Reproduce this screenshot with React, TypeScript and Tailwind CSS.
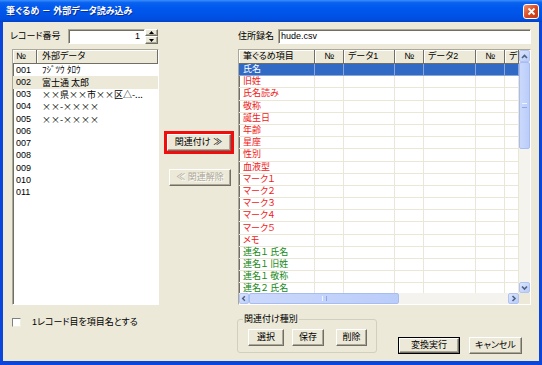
import React from "react";

const FONT = "[font-family:'Liberation_Sans','Noto_Sans_CJK_JP',sans-serif] [font-feature-settings:'palt']";
const CJK = "[font-family:'Noto_Sans_CJK_JP',sans-serif]";

const btn =
  "flex items-center justify-center bg-[#ece9d8] border border-t-white border-l-white border-b-[#716f64] border-r-[#716f64] shadow-[inset_-1px_-1px_0_#aca899]";

const sunken =
  "border border-t-[#aca899] border-l-[#aca899] border-b-white border-r-white shadow-[inset_1px_1px_0_#716f64]";

const headCell =
  "flex items-center h-full border-r border-r-[#716f64] shadow-[inset_1px_1px_0_#fff] overflow-hidden whitespace-nowrap";

const records = [
  ["001", "ﾌｼﾞﾂｳ ﾀﾛｳ"],
  ["002", "富士通 太郎"],
  ["003", "××県××市××区△-..."],
  ["004", "××-××××"],
  ["005", "××-××××"],
  ["006", ""],
  ["007", ""],
  ["008", ""],
  ["009", ""],
  ["010", ""],
  ["011", ""],
];

const items: [string, string][] = [
  ["氏名", "sel"],
  ["旧姓", "red"],
  ["氏名読み", "red"],
  ["敬称", "red"],
  ["誕生日", "red"],
  ["年齢", "red"],
  ["星座", "red"],
  ["性別", "red"],
  ["血液型", "red"],
  ["マーク１", "red"],
  ["マーク２", "red"],
  ["マーク３", "red"],
  ["マーク４", "red"],
  ["マーク５", "red"],
  ["メモ", "red"],
  ["連名１ 氏名", "green"],
  ["連名１ 旧姓", "green"],
  ["連名１ 敬称", "green"],
  ["連名２ 氏名", "green"],
];

// column widths of the mapping grid
const cols = ["w-[76px]", "w-[29px]", "w-[51px]", "w-[29px]", "w-[52px]", "w-[29px]", "w-[14px]"];
const heads = ["筆ぐるめ項目", "№", "データ1", "№", "データ2", "№", "デ"];

const Chevron = ({ dir }: { dir: "up" | "down" | "left" | "right" }) => {
  const pts = {
    up: "2,6 4.5,3.5 7,6",
    down: "2,3.5 4.5,6 7,3.5",
    left: "5.5,2 3,4.5 5.5,7",
    right: "3.5,2 6,4.5 3.5,7",
  }[dir];
  return (
    <svg width="9" height="9" viewBox="0 0 9 9">
      <polyline points={pts} fill="none" stroke="#4d6185" strokeWidth="1.6" />
    </svg>
  );
};

const sbBtn =
  "flex items-center justify-center bg-[linear-gradient(135deg,#dbe5fd,#b9cbf8)] border border-[#b0c4f3] rounded-[2px]";
const sbThumb =
  "flex items-center justify-center bg-[linear-gradient(90deg,#cbd8fc,#bacdf9)] border border-[#a7bdf1] rounded-[2px]";

const App = () => {
  return (
    <div className={`w-[542px] h-[365px] flex flex-col bg-[#0b46dc] overflow-hidden text-[9px] leading-[11px] text-black ${FONT}`}>
      {/* TITLE BAR */}
      <div className="h-[22px] shrink-0 flex items-center pl-[6px] pr-[3px] bg-[linear-gradient(180deg,#3b8fff_0%,#0a62ef_12%,#0058ee_35%,#0054e8_65%,#004ee0_88%,#0042c8_100%)]">
        <span className="text-white font-bold text-[9px] [text-shadow:1px_1px_0_#0a2f9c]">筆ぐるめ － 外部データ読み込み</span>
        <div className="ml-auto w-[16px] h-[15px] rounded-[3px] border border-white bg-[linear-gradient(135deg,#f0906c,#d8461e_55%,#c23a14)] flex items-center justify-center">
          <svg width="9" height="9" viewBox="0 0 9 9">
            <path d="M1.5 1.5 L7.5 7.5 M7.5 1.5 L1.5 7.5" stroke="#fff" strokeWidth="1.8" />
          </svg>
        </div>
      </div>

      {/* FRAME */}
      <div className="flex-1 flex px-[3px] pb-[4px]">
        <div className="flex-1 flex flex-col bg-[#ece9d8] pt-[7px] pl-[7px]">
          {/* TOP ROW */}
          <div className="flex items-center h-[15px]">
            <span className="w-[58px]">レコード番号</span>
            <div className={`w-[77px] h-[15px] bg-white ${sunken} flex items-center justify-end pr-[4px]`}>1</div>
            <div className="w-[13px] h-[15px] flex flex-col">
              <div className={`${btn} h-[7px]`}>
                <svg width="5" height="3" viewBox="0 0 5 3"><polygon points="0,3 2.5,0 5,3" fill="#000" /></svg>
              </div>
              <div className={`${btn} h-[8px]`}>
                <svg width="5" height="3" viewBox="0 0 5 3"><polygon points="0,0 2.5,3 5,0" fill="#000" /></svg>
              </div>
            </div>
            <span className="ml-[80px] w-[40px]">住所録名</span>
            <div className={`w-[253px] h-[15px] bg-white ${sunken} flex items-center pl-[2px]`}>hude.csv</div>
          </div>

          {/* MAIN ROW */}
          <div className="flex mt-[5px] h-[256px]">
            {/* RECORD LIST */}
            <div className={`ml-[2px] w-[147px] h-full bg-white ${sunken} flex flex-col overflow-hidden`}>
              <div className="h-[14px] shrink-0 flex bg-[#ece9d8] border-b border-b-[#716f64]">
                <div className={`${headCell} w-[24px] pl-[3px]`}>№</div>
                <div className={`${headCell} flex-1 pl-[5px]`}>外部データ</div>
              </div>
              {records.map(([no, data]) => (
                <div key={no} className={`h-[12.25px] shrink-0 flex items-center ${no === "002" ? "bg-[#ece9d8]" : ""}`}>
                  <span className="w-[24px] pl-[3px]">{no}</span>
                  <span className={`pl-[5px] whitespace-nowrap ${no === "001" ? "" : CJK}`}>{data}</span>
                </div>
              ))}
            </div>

            {/* MIDDLE BUTTONS */}
            <div className="w-[79px] flex flex-col items-center pt-[82px]">
              <div className="border-[3px] border-[#f20d0d]">
                <div className={`${btn} w-[64px] h-[17px]`}>関連付け ≫</div>
              </div>
              <div className={`${btn} w-[62px] h-[17px] mt-[15px] ml-[3px] text-[#aca899] [text-shadow:1px_1px_0_#fff]`}>≪ 関連解除</div>
            </div>

            {/* MAPPING GRID */}
            <div className={`w-[293px] h-full bg-white ${sunken} flex flex-col overflow-hidden`}>
              <div className="flex h-[243px]">
                <div className="w-[280px] flex flex-col overflow-hidden">
                  <div className="h-[14px] shrink-0 flex bg-[#ece9d8] border-b border-b-[#716f64]">
                    {heads.map((h, i) => (
                      <div
                        key={i}
                        className={`${headCell} ${cols[i]} shrink-0 ${h === "№" ? "justify-center" : "pl-[4px]"}`}
                      >
                        {h}
                      </div>
                    ))}
                  </div>
                  {items.map(([label, kind], r) => (
                    <div key={r} className={`h-[12.2px] shrink-0 flex ${kind === "sel" ? "bg-[#316ac5]" : ""}`}>
                      {cols.map((w, i) => (
                        <div
                          key={i}
                          className={`${w} shrink-0 h-full flex items-center border-r border-b ${
                            kind === "sel" ? "border-[#8aa5d6]" : "border-[#ebe7d6]"
                          } ${i === 0 ? "pl-[4px] whitespace-nowrap" : ""} ${
                            kind === "sel" ? "text-white" : kind === "red" ? "text-[#f01818]" : "text-[#168a16]"
                          }`}
                        >
                          {i === 0 ? label : ""}
                        </div>
                      ))}
                    </div>
                  ))}
                </div>
                {/* VERTICAL SCROLLBAR */}
                <div className="w-[11px] h-full flex flex-col bg-[#f4f3ee]">
                  <div className={`${sbBtn} h-[12px]`}><Chevron dir="up" /></div>
                  <div className={`${sbThumb} h-[87px]`}>
                    <div className="w-[5px] h-[5px] border-y border-[#eef3fe] border-b-[#8ca7e4]" />
                  </div>
                  <div className="flex-1" />
                  <div className={`${sbBtn} h-[11px]`}><Chevron dir="down" /></div>
                </div>
              </div>
              {/* HORIZONTAL SCROLLBAR */}
              <div className="flex h-[11px]">
                <div className="w-[280px] flex bg-[#f4f3ee]">
                  <div className={`${sbBtn} w-[10px]`}><Chevron dir="left" /></div>
                  <div className={`${sbThumb} w-[150px]`}>
                    <div className="w-[5px] h-[5px] border-x border-[#eef3fe] border-r-[#8ca7e4]" />
                  </div>
                  <div className="flex-1" />
                  <div className={`${sbBtn} w-[11px]`}><Chevron dir="right" /></div>
                </div>
                <div className="w-[11px] bg-[#ece9d8]" />
              </div>
            </div>
          </div>

          {/* BOTTOM ROW */}
          <div className="flex items-start">
            <div className="w-[227px] flex items-center mt-[12px] ml-[2px]">
              <div className="w-[9px] h-[9px] bg-white border border-t-[#808080] border-l-[#808080] border-b-[#f1efe2] border-r-[#f1efe2]" />
              <span className="ml-[11px]">1レコード目を項目名とする</span>
            </div>
            <fieldset className="w-[140px] h-[39px] mt-[9px] -ml-[2px] border border-[#d0d0bf] rounded-[3px] flex">
              <legend className="ml-[5px] px-[1px]">関連付け種別</legend>
              <div className="flex mt-[4px]">
                <div className={`${btn} ml-[10px] w-[36px] h-[17px]`}>選択</div>
                <div className={`${btn} ml-[8px] w-[32px] h-[17px]`}>保存</div>
                <div className={`${btn} ml-[12px] w-[31px] h-[17px]`}>削除</div>
              </div>
            </fieldset>
            <div className="ml-[21px] mt-[32px] border border-black">
              <div className={`${btn} w-[60px] h-[15px]`}>変換実行</div>
            </div>
            <div className={`${btn} ml-[9px] mt-[32px] w-[53px] h-[17px]`}>キャンセル</div>
          </div>
        </div>
      </div>
    </div>
  );
};

export default App;
